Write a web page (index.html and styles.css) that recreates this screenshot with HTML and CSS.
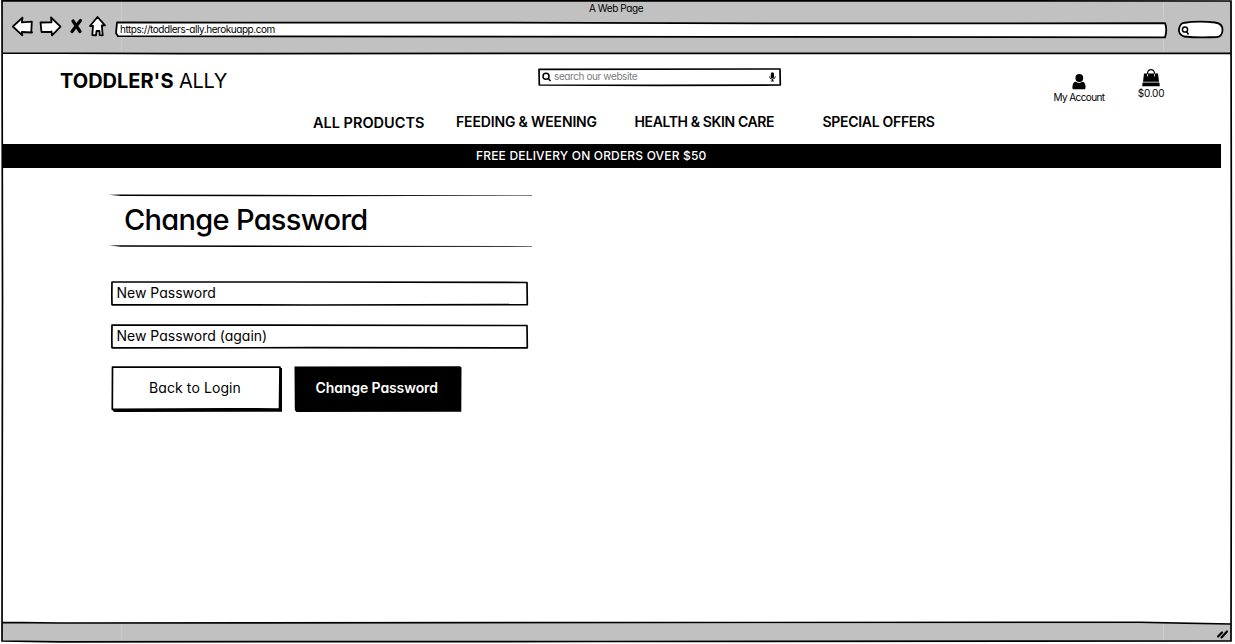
FILE: index.html
```html
<!DOCTYPE html>
<html lang="en">
<head>
<meta charset="utf-8">
<title>A Web Page</title>
<link rel="stylesheet" href="styles.css">
</head>
<body>
<div class="window">
  <svg class="frame" viewBox="0 0 1235 644">
    <path class="chrome-fill" d="M2 1H1231V53H2ZM2 623L1231 624V641H2Z"/>
    <path class="seam" d="M121.500 2V52M1163.500 2V52M121.500 624V640M1163.500 624V640"/>
    <path class="line" d="M2 .8L1231 1L1231.500 330L1231 641L600 641.500L60 641.800L2 641L2.500 300ZM2 53L180 53.600L700 53.300L1231 53.300M2 622.300L60 623L760 622.500L1140 622.400L1231 624"/>
  </svg>
  <header class="toolbar">
    <div class="window-title"><span class="fit window-label">A Web Page</span></div>
    <div class="controls">
      <svg class="nav-icons" viewBox="0 0 110 28">
        <path class="outline" d="M12.800 13.500L22.500 4.700L21.800 9.300L31.800 8.700L31.300 18.300L32 19.500L21.800 19L22.300 22.300Z"/>
        <path class="outline" d="M40.500 9.500L51.500 9.300L51 4.500L60.500 13.700L52 22.300L51.500 18.300L51.500 19L41.500 19Z"/>
        <path class="cross" d="M73 8L80 18.500M80.500 7.500L72 18.500"/>
        <path class="outline" d="M97.500 4L105 12.300L101.800 12.500L102.700 22.300L99.700 22.100L99.500 18L96.500 18L96 22.300L92.300 22L93 13L90 13Z"/>
      </svg>
      <div class="address">
        <svg class="backing" viewBox="0 0 1052 18"><path class="outline" d="M2 1.500L360 1.600L700 2.400L1050 2.200Q1052.500 8 1050 16.400L600 15.800L3 15.200L1 12Z"/></svg>
        <span class="fit url">https://toddlers-ally.herokuapp.com</span>
      </div>
      <svg class="go" viewBox="0 0 46 20">
        <path class="outline" d="M5 3Q20 .5 37 2.500Q45 3.500 44.500 10.500Q44 16.500 39 17Q20 18 6 16.500Q0 14 1 9Q2 4 5 3Z"/>
        <circle class="lens" cx="7" cy="9.500" r="2.600"/><path class="lens" d="M8.500 11.500L10.500 14.500"/>
      </svg>
    </div>
  </header>

  <div class="site-head">
    <div class="logo"><span class="fit brand-bold">TODDLER'S</span><span class="fit brand-light">ALLY</span></div>
    <div class="search">
      <svg class="backing" viewBox="0 0 244 19"><path class="box" d="M1 1.300L242 1L242.300 17L120 17.300L1.300 17Z"/>
        <circle class="glass" cx="8" cy="8.300" r="3"/><path class="glass" d="M10.300 10.600L12.500 13"/>
        <rect x="232.800" y="4.300" width="3.200" height="6" rx="1.600"/><path class="mic" d="M231.500 8.300Q231.500 11.100 234.400 11.100Q237.300 11.100 237.300 8.300M234.400 11V13M232.700 13H236.100"/>
      </svg>
      <span class="fit placeholder">search our website</span>
    </div>
    <div class="account">
      <svg class="user-icon" viewBox="0 0 14 16"><circle cx="7.300" cy="4" r="3.900"/><path d="M1 15.200Q0 14.500.5 12Q1 8 3.500 7.800Q7 10 10.500 7.800Q13 8 13.500 12Q13.800 14.500 13 15.200Z"/></svg>
      <span class="fit account-label">My Account</span>
    </div>
    <div class="basket">
      <svg class="bag-icon" viewBox="0 0 18 18"><path d="M2 4.500H16L17 12.800H1ZM.6 13.600H17.400L17.800 17.300H.2Z"/><path class="handle" d="M5.500 7V4Q6 .6 9 .6Q12 .6 12.500 4V7"/><path class="handle-in" d="M5.500 5V7.500M12.500 5V7.500"/></svg>
      <span class="fit price">$0.00</span>
    </div>
  </div>

  <nav class="menu">
    <span class="fit item-all">ALL PRODUCTS</span>
    <span class="fit item-feed">FEEDING &amp; WEENING</span>
    <span class="fit item-health">HEALTH &amp; SKIN CARE</span>
    <span class="fit item-offers">SPECIAL OFFERS</span>
  </nav>
  <div class="banner"><span class="fit delivery">FREE DELIVERY ON ORDERS OVER $50</span></div>

  <main class="content">
    <div class="heading">
      <svg class="backing" viewBox="0 0 424 54"><path class="rule" d="M0 .7L12 .5L210 1L423 1.200V1.800L210 2.200L12 2ZM0 51.500L12 51.300L210 51.700L423 52V52.600L210 53L12 52.800Z"/></svg>
      <h1 class="fit title">Change Password</h1>
    </div>
    <div class="field first">
      <svg class="backing" viewBox="0 0 419 26"><path class="box" d="M2 1L180 1L417 1.500L417.300 23.700L200 24L2 23.800L1.800 14Z"/></svg>
      <span class="fit label-new">New Password</span>
    </div>
    <div class="field">
      <svg class="backing" viewBox="0 0 419 26"><path class="box" d="M2 1L180 1.200L417 1.500L417.300 23.800L200 23.700L2 23.800L1.800 14Z"/></svg>
      <span class="fit label-again">New Password (again)</span>
    </div>
    <div class="actions">
      <div class="button back">
        <svg class="backing" viewBox="0 0 171 47"><path d="M2 1.500L171 2L171 45.800L3 46L1.500 44Z"/><path class="box" d="M1.500 1.200L169 1L168.500 43L120 42.800L1.300 43.300Z"/></svg>
        <span class="fit back-label">Back to Login</span>
      </div>
      <div class="button change">
        <svg class="backing" viewBox="0 0 168 47"><path d="M.5 .5L166 .3L167.500 1.500L167.300 45.800L2.500 46L.8 44Z"/></svg>
        <span class="fit change-label">Change Password</span>
      </div>
    </div>
  </main>
  <svg class="grip" viewBox="0 0 16 12"><path d="M3 8.500L7 4.500M6.500 9.500L12 3.500"/></svg>
</div>
</body>
</html>
```
FILE: styles.css
```css
body { margin: 0; background: #fff; color: #000; font-family: Inter, "Noto Sans", sans-serif; font-feature-settings: "cv11"; }
.window { position: relative; width: 1235px; height: 644px; overflow: hidden; }
.frame { position: absolute; inset: 0; width: 1235px; height: 644px; }
.fit { display: inline-block; position: relative; white-space: nowrap; }
svg { display: block; overflow: visible; }
.chrome-fill { fill: #c1c1c1; }
.seam { stroke: #cdcdcd; stroke-width: 1; }
.line { fill: none; stroke: #000; stroke-width: 1.7; }
.outline { fill: #fff; stroke: #000; stroke-width: 1.8; stroke-linejoin: round; }
.cross { fill: none; stroke: #000; stroke-width: 3.2; stroke-linecap: round; }
.lens, .glass, .mic { fill: none; stroke: #000; stroke-width: 1.5; }
.mic { stroke-width: 0.9; }
.box { fill: #fff; stroke: #000; stroke-width: 1.7; stroke-linejoin: round; }
.backing { position: absolute; inset: 0; width: 100%; height: 100%; }

.toolbar { position: relative; height: 54px; }
.window-title { height: 12px; padding: 2px 3px 0 0; text-align: center; font-size: 10px; line-height: 12px; }
.window-label { letter-spacing: -0.4px; }
.controls { display: flex; align-items: flex-start; }
.nav-icons { width: 110px; height: 28px; margin-top: -1px; }
.address { position: relative; width: 1052px; height: 18px; margin: 7px 0 0 5px; box-sizing: border-box; padding: 0 0 0 5px; }
.url { display: block; font-size: 10px; line-height: 17px; letter-spacing: -0.45px; }
.go { width: 46px; height: 20px; margin: 6px 0 0 11px; }

.site-head { position: relative; display: flex; height: 52px; }
.logo { display: flex; width: 478px; padding-left: 60px; padding-top: 15px; font-size: 20px; line-height: 24px; }
.brand-bold { width: 119px; font-weight: 700; }
.brand-light { letter-spacing: -0.3px; }
.search { position: relative; width: 244px; height: 19px; margin-top: 14px; }
.placeholder { display: block; margin-left: 16px; color: #7c7c80; font-size: 10px; line-height: 17px; letter-spacing: -0.4px; }
.account { display: flex; flex-direction: column; align-items: center; width: 60px; margin-left: 267px; padding-top: 20px; font-size: 10px; line-height: 14px; letter-spacing: -0.6px; }
.user-icon { width: 14px; height: 16px; }
.basket { display: flex; flex-direction: column; align-items: center; width: 40px; margin-left: 22px; padding-top: 15px; font-size: 10px; line-height: 13px; letter-spacing: -0.25px; }
.bag-icon { width: 18px; height: 18px; }
.handle { fill: none; stroke: #000; stroke-width: 1.2; }
.handle-in { stroke: #fff; stroke-width: 0.8; }

.menu { display: flex; height: 38px; padding-left: 313px; font-size: 14px; line-height: 32px; font-weight: 600; }
.item-all { width: 143px; font-size: 14.5px; line-height: 34px; }
.item-feed { width: 178.5px; letter-spacing: -0.15px; }
.item-health { width: 188px; letter-spacing: -0.38px; }
.item-offers { letter-spacing: -0.3px; }
.banner { position: relative; width: 1219px; height: 23.500px; margin-left: 2px; background: #000; color: #fff; font-size: 12px; line-height: 24px; font-weight: 500; }
.delivery { margin-left: 474px; letter-spacing: 0.18px; }

.content { position: relative; width: 424px; padding: 26.500px 0 0 109px; }
.heading { position: relative; height: 54px; }
.title { margin: 0 0 0 15px; font-size: 29px; line-height: 52px; font-weight: 500; letter-spacing: -0.7px; }
.field { position: relative; width: 419px; height: 26px; margin: 17px 0 0 1px; font-size: 14px; line-height: 24px; }
.field .fit { margin-left: 6.5px; }
.first { margin-top: 33px; }
.actions { display: flex; gap: 12px; margin: 16px 0 0 2px; font-size: 14px; line-height: 44px; }
.button { position: relative; height: 47px; }
.back { width: 171px; }
.change { width: 168px; color: #fff; font-weight: 600; }
.back .fit { margin-left: 38px; letter-spacing: 0.1px; }
.change .fit { margin-left: 21.5px; letter-spacing: -0.1px; }
.grip { position: absolute; left: 1215px; top: 628px; width: 16px; height: 12px; fill: none; stroke: #000; stroke-width: 2.2; stroke-linecap: round; }
```
